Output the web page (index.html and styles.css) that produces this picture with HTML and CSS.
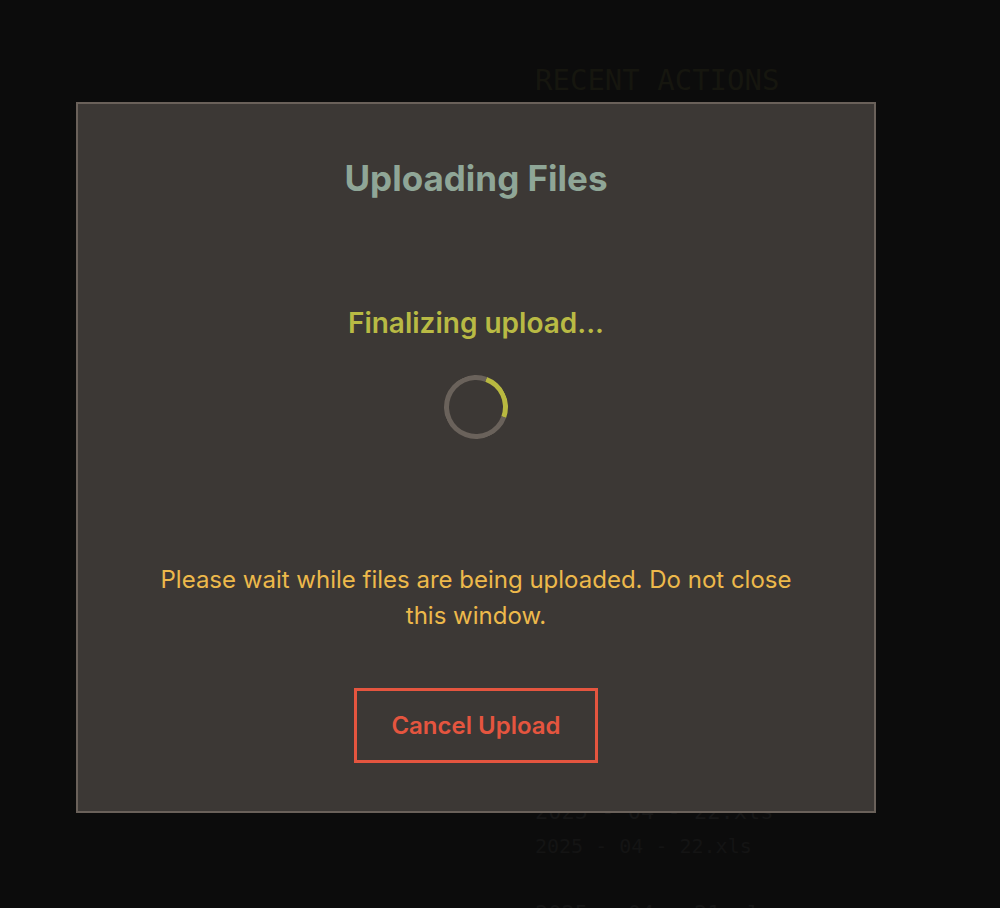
FILE: index.html
```html
<!DOCTYPE html>
<html lang="en">
<head>
<meta charset="utf-8">
<title>Uploading Files</title>
<link rel="stylesheet" href="styles.css">
</head>
<body>
<div class="page">
  <main class="main"></main>
  <aside class="sidebar">
    <h2 class="side-title">RECENT ACTIONS</h2>
    <ul class="actions">
      <li class="action">
        <div class="action-name">2025 - 04 - 22.xls</div>
        <div class="action-meta">2025 - 04 - 22.xls</div>
      </li>
      <li class="action">
        <div class="action-name">2025 - 04 - 21.xls</div>
      </li>
    </ul>
  </aside>
</div>

<div class="overlay">
  <div class="modal" role="dialog" aria-labelledby="modal-title">
    <h1 class="modal-title" id="modal-title">Uploading Files</h1>
    <div class="status">Finalizing upload...</div>
    <div class="spinner"></div>
    <p class="notice">Please wait while files are being uploaded. Do not close this window.</p>
    <button class="cancel-btn" type="button">Cancel Upload</button>
  </div>
</div>
</body>
</html>
```

FILE: styles.css
```css
* { box-sizing: border-box; }

html, body {
  margin: 0;
  padding: 0;
  background: #0c0c0c;
  height: 100%;
}

body {
  font-family: Inter, "Noto Sans", "Liberation Sans", sans-serif;
  overflow: hidden;
}

.page {
  display: grid;
  grid-template-columns: 535px 1fr;
  min-height: 100%;
}

.sidebar {
  padding-top: 62px;
  font-family: "DejaVu Sans Mono", "Liberation Mono", monospace;
}

.side-title {
  margin: 0;
  font-size: 29px;
  font-weight: normal;
  line-height: 36px;
  color: #16160f;
}

.actions {
  list-style: none;
  margin: 0;
  padding: 700px 0 0;
}

.action {
  margin-bottom: 40px;
}

.action-name {
  font-size: 22px;
  line-height: 28px;
  color: #161616;
}

.action-meta {
  font-size: 20px;
  line-height: 28px;
  margin-top: 6px;
  color: #141414;
}

.overlay {
  position: fixed;
  inset: 0;
  display: flex;
  align-items: flex-start;
  justify-content: flex-start;
  padding: 102px 0 0 76px;
}

.modal {
  width: 800px;
  height: 711px;
  background: #3c3835;
  border: 2px solid #6a615a;
  display: flex;
  flex-direction: column;
  align-items: center;
  padding: 55px 70px 48px;
  text-align: center;
}

.modal-title {
  margin: 0;
  font-size: 35px;
  font-weight: 700;
  line-height: 38px;
  color: #8fa697;
}

.status {
  margin-top: 109px;
  font-size: 28px;
  font-weight: 600;
  line-height: 34px;
  color: #b9ba44;
}

.spinner {
  margin-top: 35px;
  width: 64px;
  height: 64px;
  border-radius: 50%;
  border: 5px solid #6a625b;
  border-top-color: #b9b940;
  transform: rotate(65deg);
}

.notice {
  margin: 123px 0 0;
  max-width: 650px;
  font-size: 24px;
  line-height: 36px;
  color: #edb94b;
}

.cancel-btn {
  margin-top: 54px;
  font-family: inherit;
  font-size: 24px;
  font-weight: 600;
  line-height: 29px;
  color: #e5553f;
  background: transparent;
  border: 3px solid #e5553f;
  padding: 20px 34px;
  cursor: pointer;
}
```
